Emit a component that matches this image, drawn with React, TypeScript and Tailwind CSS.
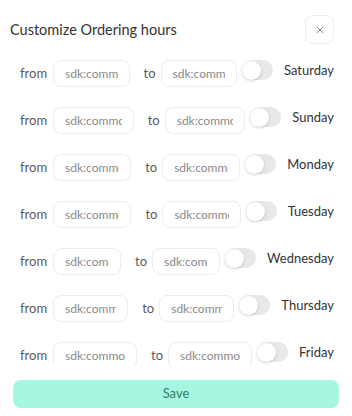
import { X } from "lucide-react"

const days = ["Saturday", "Sunday", "Monday", "Tuesday", "Wednesday", "Thursday", "Friday"]

function Toggle() {
  return (
    <div className="relative h-[20px] w-[31px] shrink-0 rounded-full bg-[#e8e8e8]">
      <div className="absolute left-0 top-[0.5px] h-[19px] w-[19px] rounded-full bg-white shadow-[0_1px_3px_rgba(0,0,0,0.18)]" />
    </div>
  )
}

function Row({ day }: { day: string }) {
  return (
    <div className="flex items-start pl-[20px] pr-[18px]">
      <span className="flex h-[27px] items-center text-[13px] text-[#5a5a5a]">from</span>
      <input
        className="ml-[6px] h-[27px] min-w-0 flex-[1_1_0px] rounded-[8px] border border-[#ececec] px-[11px] text-[12px] text-[#333] outline-none placeholder:text-[#8a8a8a]"
        placeholder="sdk:common.from"
      />
      <span className="ml-[14px] flex h-[27px] items-center text-[13px] text-[#5a5a5a]">to</span>
      <input
        className="ml-[5px] h-[27px] min-w-0 flex-[1_1_5px] rounded-[8px] border border-[#ececec] px-[11px] text-[12px] text-[#333] outline-none placeholder:text-[#8a8a8a]"
        placeholder="sdk:common.to"
      />
      <div className="ml-[5px]">
        <Toggle />
      </div>
      <span className="ml-[11px] pt-[1px] text-[13px] leading-[18px] text-[#333]">{day}</span>
    </div>
  )
}

export default function App() {
  return (
    <div className="flex h-[416px] w-[352px] flex-col bg-white font-['Lato',sans-serif]">
      <div className="flex items-center justify-between pl-[10px] pr-[18px] pt-[15px]">
        <h2 className="text-[14.5px] text-[#333]">Customize Ordering hours</h2>
        <button className="flex h-[29px] w-[29px] items-center justify-center rounded-[8px] border border-[#ededed] text-[#666]">
          <X size={12} strokeWidth={1.5} />
        </button>
      </div>

      <div className="mt-[16px] flex h-[306px] flex-col gap-[20px] overflow-hidden">
        {days.map((d) => (
          <Row key={d} day={d} />
        ))}
      </div>

      <button className="mx-[13px] mt-[14px] h-[28px] rounded-[8px] bg-[#a6f7e2] text-[13px] text-[#3a7769]">
        Save
      </button>
    </div>
  )
}
